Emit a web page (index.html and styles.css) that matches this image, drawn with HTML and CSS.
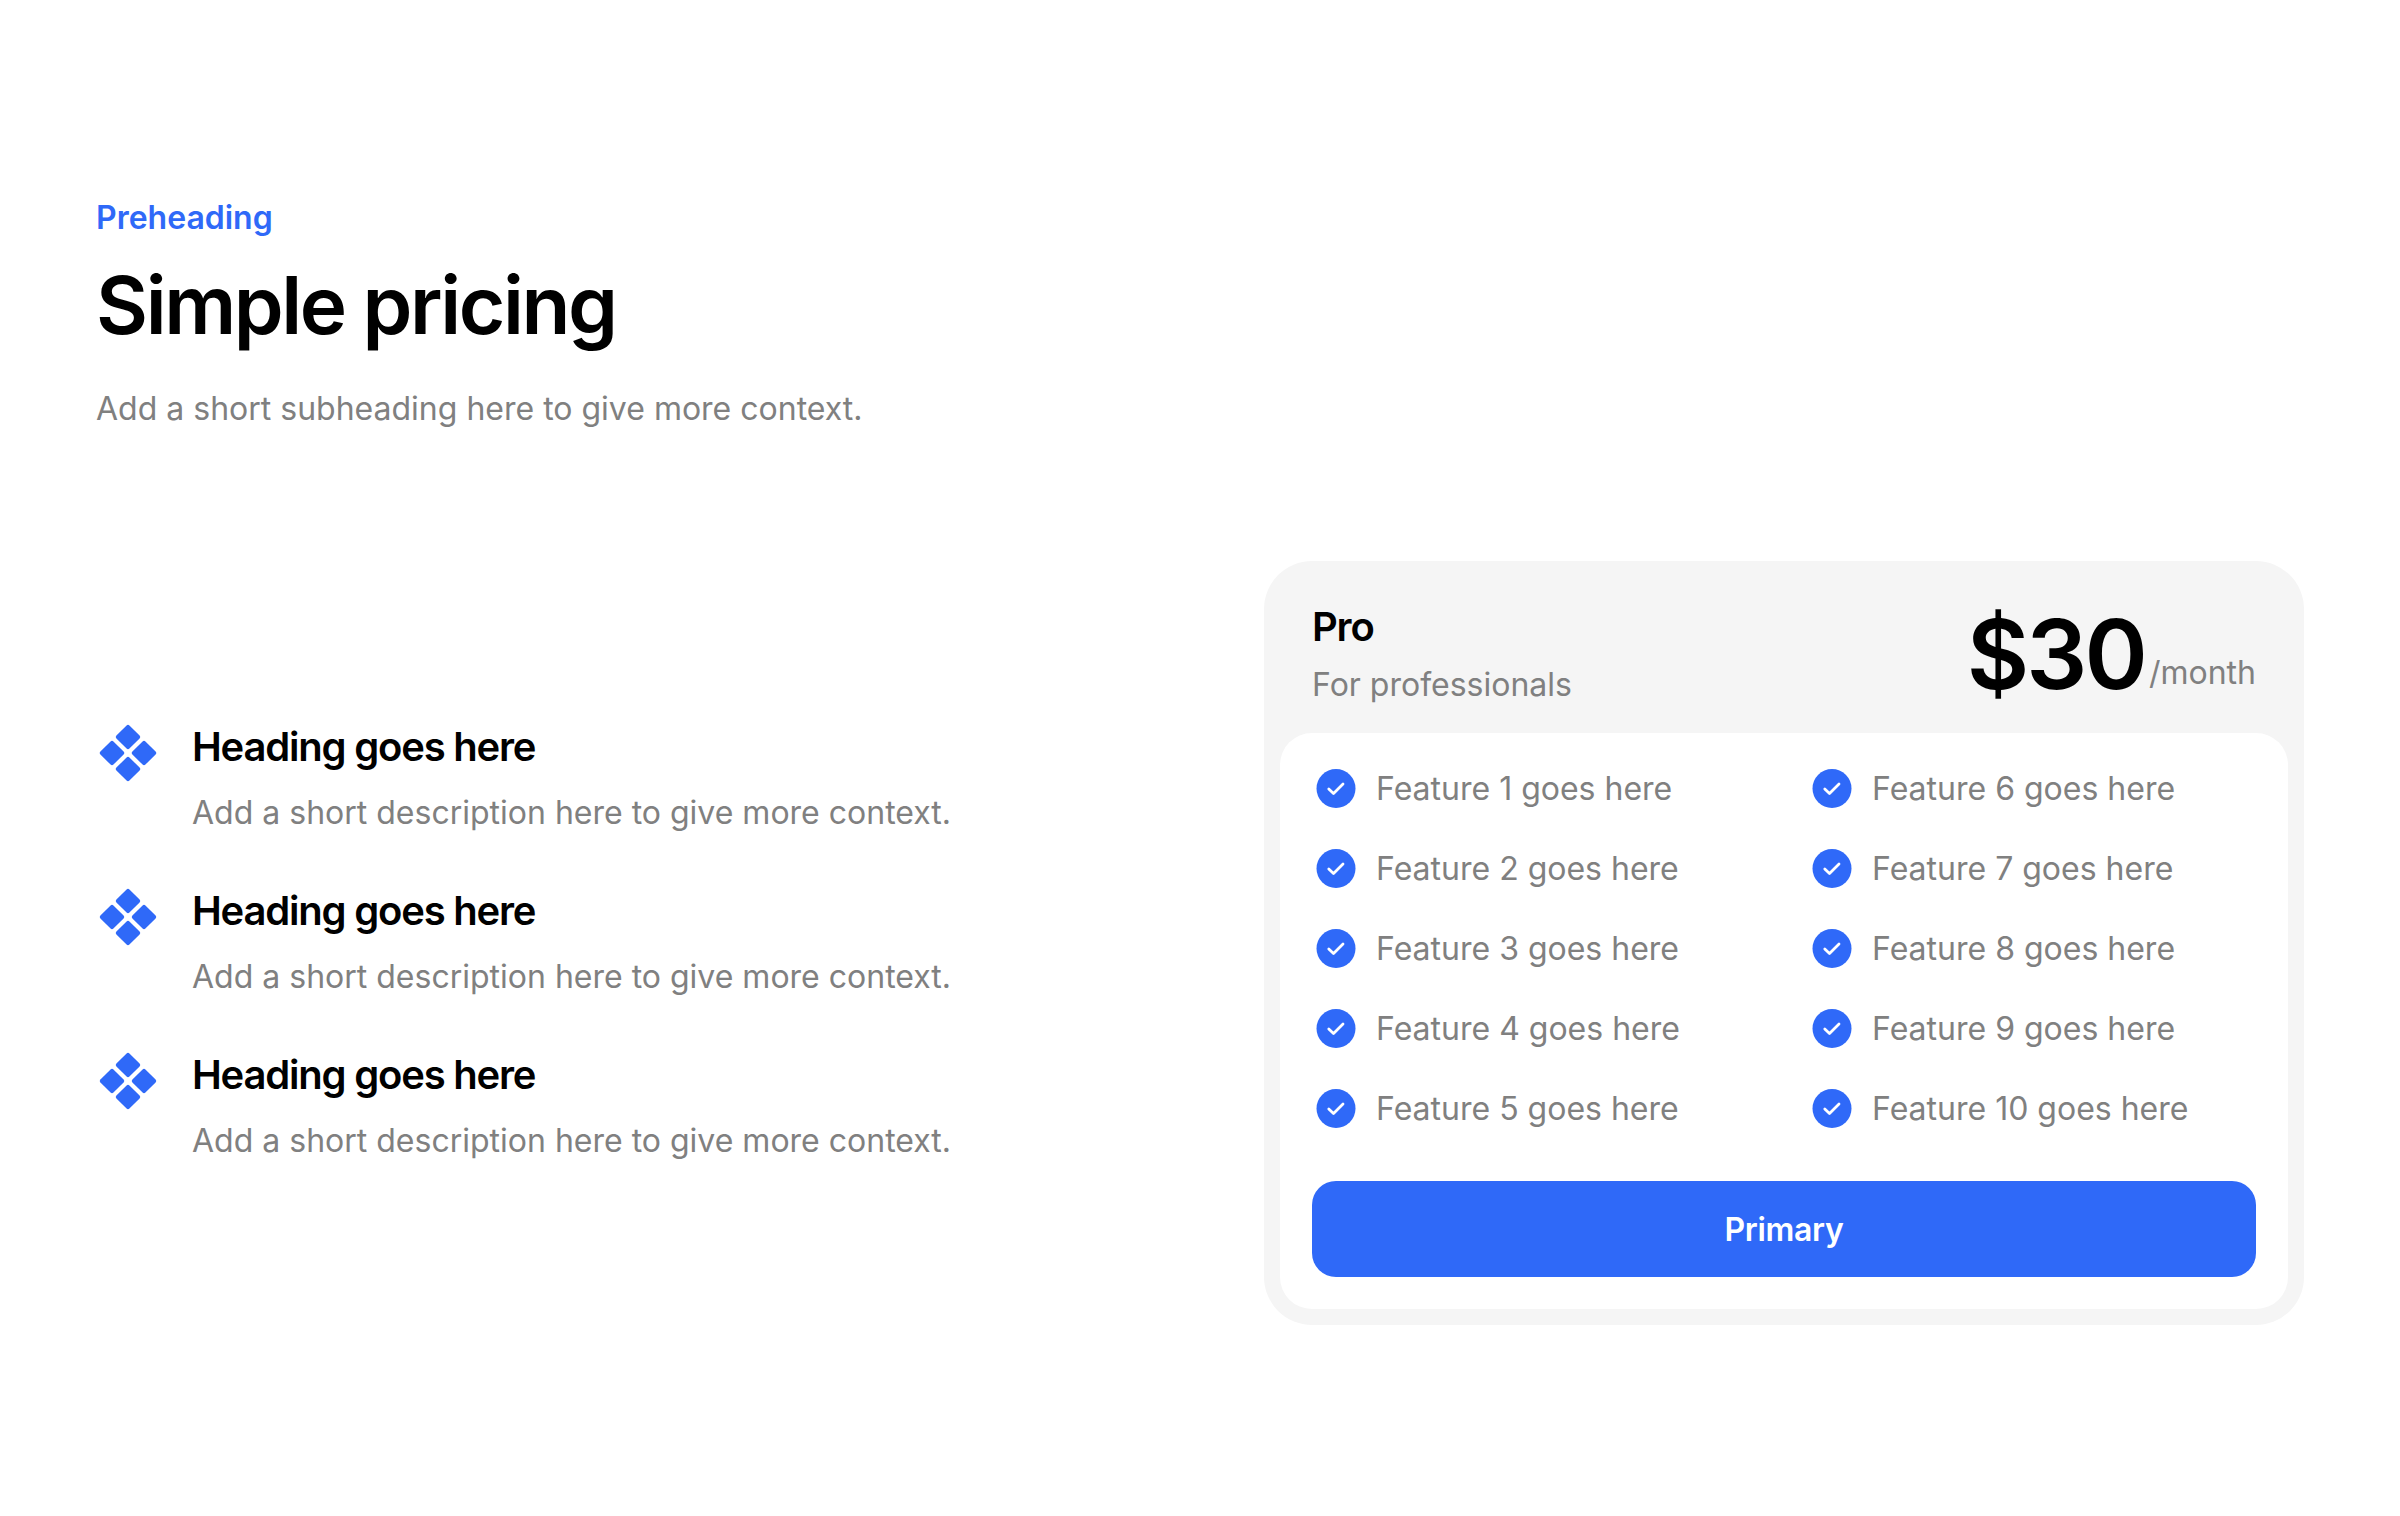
FILE: index.html

```html
<!DOCTYPE html>
<html lang="en">
<head>
  <meta charset="UTF-8" />
  <title>Simple pricing</title>
  <link rel="stylesheet" href="styles.css">
</head>
<body>
  <svg class="sprite" width="0" height="0">
    <symbol id="diamonds" viewBox="0 0 64 64">
      <rect x="22.8" y="6.8" width="18.4" height="18.4" rx="2" transform="rotate(45 32 16)" />
      <rect x="38.8" y="22.8" width="18.4" height="18.4" rx="2" transform="rotate(45 48 32)" />
      <rect x="22.8" y="38.8" width="18.4" height="18.4" rx="2" transform="rotate(45 32 48)" />
      <rect x="6.8" y="22.8" width="18.4" height="18.4" rx="2" transform="rotate(45 16 32)" />
    </symbol>
    <symbol id="check" viewBox="0 0 48 48">
      <circle cx="24" cy="24.5" r="19.5" fill="#2f69f8" />
      <path d="M16.8 25l4.7 4.5 9.5-9.5" fill="none" stroke="#fff" stroke-width="2.8" stroke-linecap="round" stroke-linejoin="round" />
    </symbol>
  </svg>

  <header class="intro">
    <p class="preheading">Preheading</p>
    <h1>Simple pricing</h1>
    <p class="subheading">Add a short subheading here to give more context.</p>
  </header>

  <main class="content">
    <ul class="points">
      <li class="point">
        <svg class="point-icon"><use href="#diamonds" /></svg>
        <div>
          <h2>Heading goes here</h2>
          <p>Add a short description here to give more context.</p>
        </div>
      </li>
      <li class="point">
        <svg class="point-icon"><use href="#diamonds" /></svg>
        <div>
          <h2>Heading goes here</h2>
          <p>Add a short description here to give more context.</p>
        </div>
      </li>
      <li class="point">
        <svg class="point-icon"><use href="#diamonds" /></svg>
        <div>
          <h2>Heading goes here</h2>
          <p>Add a short description here to give more context.</p>
        </div>
      </li>
    </ul>

    <section class="plan">
      <div class="plan-head">
        <div>
          <h3>Pro</h3>
          <p>For professionals</p>
        </div>
        <div class="price"><strong>$30</strong><span>/month</span></div>
      </div>
      <div class="plan-body">
        <ul class="features">
          <li><svg class="check"><use href="#check" /></svg>Feature 1 goes here</li>
          <li><svg class="check"><use href="#check" /></svg>Feature 6 goes here</li>
          <li><svg class="check"><use href="#check" /></svg>Feature 2 goes here</li>
          <li><svg class="check"><use href="#check" /></svg>Feature 7 goes here</li>
          <li><svg class="check"><use href="#check" /></svg>Feature 3 goes here</li>
          <li><svg class="check"><use href="#check" /></svg>Feature 8 goes here</li>
          <li><svg class="check"><use href="#check" /></svg>Feature 4 goes here</li>
          <li><svg class="check"><use href="#check" /></svg>Feature 9 goes here</li>
          <li><svg class="check"><use href="#check" /></svg>Feature 5 goes here</li>
          <li><svg class="check"><use href="#check" /></svg>Feature 10 goes here</li>
        </ul>
        <button type="button">Primary</button>
      </div>
    </section>
  </main>
</body>
</html>
```

FILE: styles.css

```css
body {
  font-family: Inter, "Liberation Sans", sans-serif;
  background-color: #ffffff;
  margin: 0;
  padding: 0 96px;
  color: #000000;
}

h1, h2, h3, p, ul {
  margin: 0;
  padding: 0;
}

ul {
  list-style: none;
}

.sprite {
  position: absolute;
}

.intro {
  padding-top: 194px;
}

.preheading {
  color: #2f69f8;
  font-size: 32px;
  font-weight: 600;
  line-height: 48px;
}

h1 {
  margin-top: 15px;
  font-size: 80px;
  font-weight: 600;
  line-height: 96px;
  letter-spacing: -2.4px;
}

.subheading {
  margin-top: 32px;
  color: #808080;
  font-size: 32px;
  line-height: 48px;
}

.content {
  display: flex;
  justify-content: space-between;
  align-items: center;
  margin-top: 128px;
}

.points {
  display: flex;
  flex-direction: column;
  gap: 48px;
}

.point {
  display: flex;
  gap: 32px;
}

.point-icon {
  flex: none;
  width: 64px;
  height: 64px;
  fill: #2f69f8;
}

.point h2 {
  font-size: 40px;
  font-weight: 600;
  line-height: 52px;
  letter-spacing: -1.2px;
}

.point p {
  margin-top: 16px;
  color: #808080;
  font-size: 32px;
  line-height: 48px;
}

.plan {
  width: 1040px;
  box-sizing: border-box;
  padding: 0 16px 16px;
  background: #f5f5f5;
  border-radius: 48px;
}

.plan-head {
  display: flex;
  justify-content: space-between;
  align-items: center;
  height: 156px;
  padding: 16px 32px 0;
}

.plan-head h3 {
  font-size: 40px;
  font-weight: 600;
  line-height: 52px;
  letter-spacing: -1.2px;
}

.plan-head p {
  margin-top: 8px;
  color: #808080;
  font-size: 32px;
  line-height: 48px;
}

.price {
  display: flex;
  align-items: flex-end;
  gap: 4px;
  margin-top: -2px;
}

.price strong {
  font-size: 96px;
  font-weight: 600;
  line-height: 112px;
  letter-spacing: -2.88px;
}

.price span {
  margin-bottom: 13px;
  color: #808080;
  font-size: 32px;
  line-height: 48px;
}

.plan-body {
  padding: 31px 32px 32px;
  background: #ffffff;
  border-radius: 32px;
}

.features {
  display: grid;
  grid-template-columns: 1fr 1fr;
  column-gap: 48px;
  row-gap: 32px;
}

.features li {
  display: flex;
  align-items: center;
  gap: 16px;
  height: 48px;
  color: #808080;
  font-size: 32px;
}

.check {
  flex: none;
  width: 48px;
  height: 48px;
}

button {
  display: block;
  width: 100%;
  height: 96px;
  margin-top: 49px;
  background-color: #2f69f8;
  color: #ffffff;
  border: none;
  border-radius: 24px;
  font-family: inherit;
  font-size: 32px;
  font-weight: 600;
  letter-spacing: -0.32px;
}
```
